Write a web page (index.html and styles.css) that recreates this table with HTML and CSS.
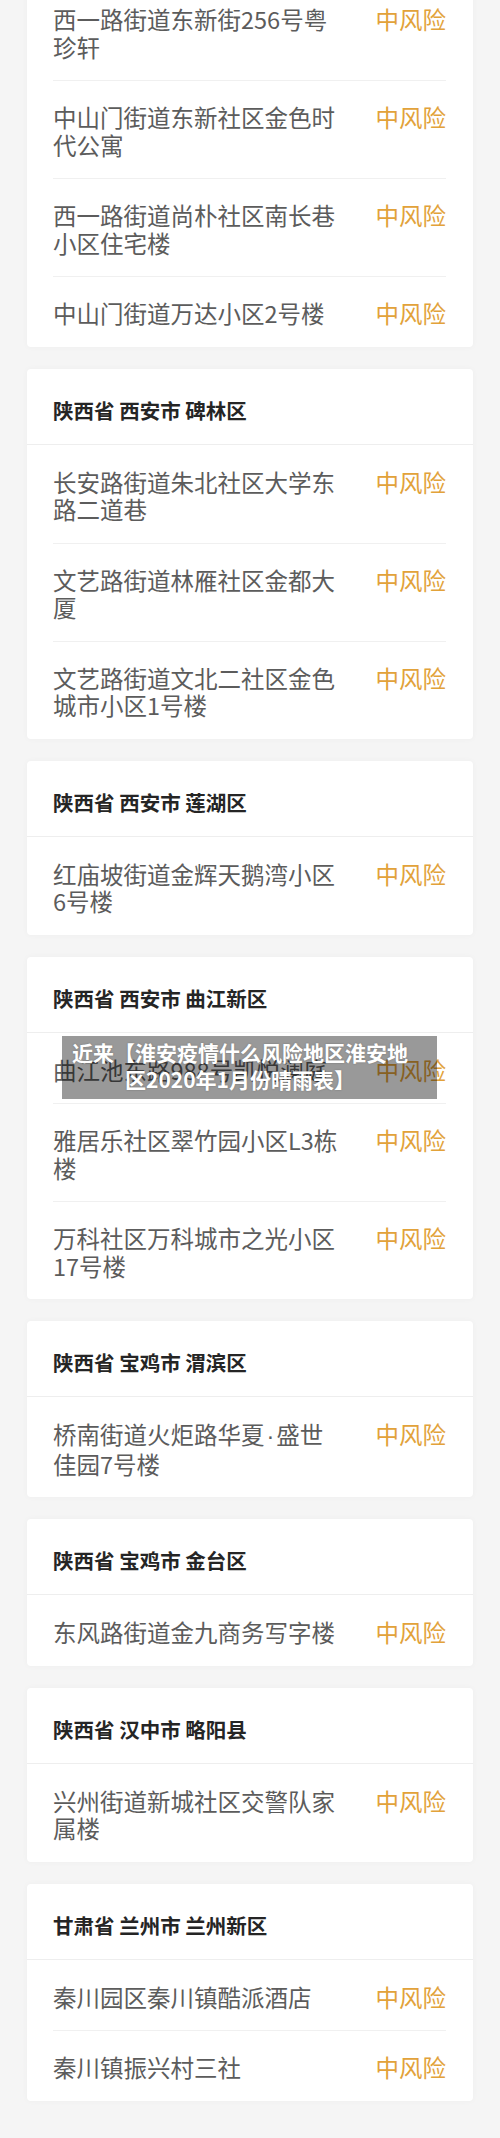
FILE: index.html
```html
<!DOCTYPE html>
<html lang="zh-CN">
<head>
  <meta charset="UTF-8" />
  <meta name="viewport" content="width=device-width, initial-scale=1.0" />
  <title>中风险地区</title>
  <link rel="stylesheet" href="styles.css">
</head>
<body>

<main class="list">

  <section class="card first">
    <div class="row"><span class="addr">西一路街道东新街256号粤珍轩</span><span class="risk">中风险</span></div>
    <div class="row"><span class="addr">中山门街道东新社区金色时代公寓</span><span class="risk">中风险</span></div>
    <div class="row"><span class="addr">西一路街道尚朴社区南长巷小区住宅楼</span><span class="risk">中风险</span></div>
    <div class="row"><span class="addr">中山门街道万达小区2号楼</span><span class="risk">中风险</span></div>
  </section>

  <section class="card">
    <h3 class="area">陕西省 西安市 碑林区</h3>
    <div class="row"><span class="addr">长安路街道朱北社区大学东路二道巷</span><span class="risk">中风险</span></div>
    <div class="row"><span class="addr">文艺路街道林雁社区金都大厦</span><span class="risk">中风险</span></div>
    <div class="row"><span class="addr">文艺路街道文北二社区金色城市小区1号楼</span><span class="risk">中风险</span></div>
  </section>

  <section class="card">
    <h3 class="area">陕西省 西安市 莲湖区</h3>
    <div class="row"><span class="addr">红庙坡街道金辉天鹅湾小区6号楼</span><span class="risk">中风险</span></div>
  </section>

  <section class="card has-banner">
    <h3 class="area">陕西省 西安市 曲江新区</h3>
    <div class="row"><span class="addr">曲江池东路988号凯悦澜庭</span><span class="risk">中风险</span></div>
    <div class="row"><span class="addr">雅居乐社区翠竹园小区L3栋楼</span><span class="risk">中风险</span></div>
    <div class="row"><span class="addr">万科社区万科城市之光小区17号楼</span><span class="risk">中风险</span></div>
    <div class="banner">近来【淮安疫情什么风险地区淮安地区2020年1月份晴雨表】</div>
  </section>

  <section class="card">
    <h3 class="area">陕西省 宝鸡市 渭滨区</h3>
    <div class="row"><span class="addr">桥南街道火炬路华夏<span class="dot">·</span>盛世佳园7号楼</span><span class="risk">中风险</span></div>
  </section>

  <section class="card">
    <h3 class="area">陕西省 宝鸡市 金台区</h3>
    <div class="row"><span class="addr">东风路街道金九商务写字楼</span><span class="risk">中风险</span></div>
  </section>

  <section class="card">
    <h3 class="area">陕西省 汉中市 略阳县</h3>
    <div class="row"><span class="addr">兴州街道新城社区交警队家属楼</span><span class="risk">中风险</span></div>
  </section>

  <section class="card">
    <h3 class="area">甘肃省 兰州市 兰州新区</h3>
    <div class="row"><span class="addr">秦川园区秦川镇酷派酒店</span><span class="risk">中风险</span></div>
    <div class="row"><span class="addr">秦川镇振兴村三社</span><span class="risk">中风险</span></div>
  </section>

</main>

</body>
</html>
```

FILE: styles.css
```css
body {
  margin: 0;
  padding: 0;
  background-color: #f5f5f5;
  font-family: "Noto Sans CJK SC", "Noto Sans", sans-serif;
  color: #5c5c5c;
}

.list {
  padding: 0 27px;
}

.card {
  background: #ffffff;
  border-radius: 4px;
  box-shadow: 0 0 6px rgba(0, 0, 0, 0.035);
  margin-bottom: 22px;
}

.card.first {
  margin-top: -18px;
  border-radius: 0 0 4px 4px;
}

.has-banner {
  position: relative;
}

.area {
  margin: 0;
  padding: 27px 26px 20px;
  font-size: 20.5px;
  line-height: 28px;
  font-weight: bold;
  color: #252525;
  border-bottom: 1px solid #eeeeee;
}

.row {
  display: flex;
  align-items: flex-start;
  margin: 0 27px 0 26px;
  padding: 24px 0 19px;
  font-size: 23.5px;
  line-height: 27.5px;
}

.row + .row {
  padding-top: 23px;
  border-top: 1px solid #f0f0f0;
}

.addr {
  flex: 0 0 288px;
}

.dot {
  font-family: "Liberation Sans", sans-serif;
  padding: 0 2px;
}

.risk {
  margin-left: auto;
  color: #e2a23a;
  white-space: nowrap;
}

/* grey caption box laid over the list */
.banner {
  position: absolute;
  left: 35px;
  top: 79px;
  width: 375px;
  box-sizing: border-box;
  padding: 3px 21px 6px 2px;
  background: rgba(0, 0, 0, 0.4);
  color: #ffffff;
  font-size: 21px;
  line-height: 27px;
  font-weight: bold;
  text-align: center;
  text-shadow: 0 0 2px rgba(0, 0, 0, 0.25);
}
```
